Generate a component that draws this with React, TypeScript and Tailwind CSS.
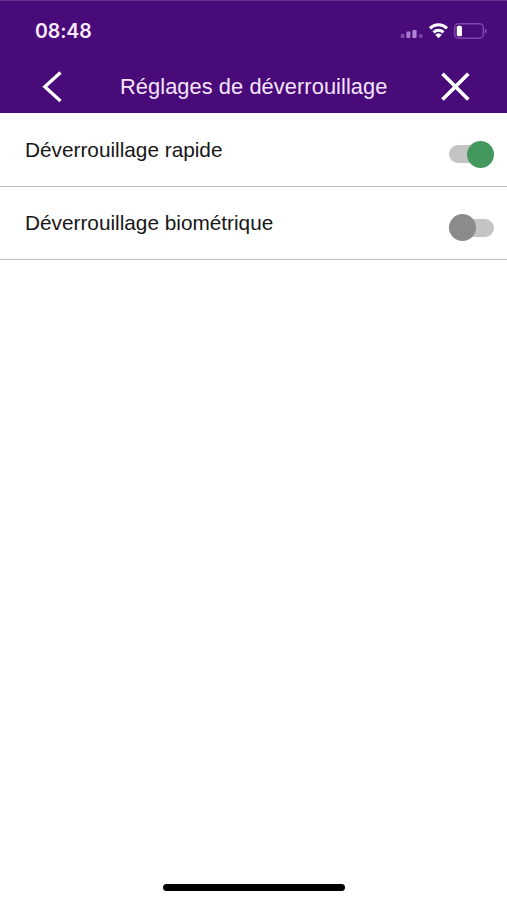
import React from "react";

function StatusIcons() {
  return (
    <svg className="h-6 w-[90px]" viewBox="0 0 90 24" fill="none">
      <g fill="#bb91df">
        <rect x="0.8" y="14.8" width="3.6" height="4.2" rx="1" opacity=".5" />
        <rect x="6.4" y="12.6" width="4" height="6.4" rx="1" opacity=".85" />
        <rect x="12.4" y="11" width="4.2" height="8" rx="1" opacity=".9" />
        <rect x="18.8" y="15" width="3.8" height="4" rx="1.4" opacity=".4" />
      </g>
      <g stroke="#fff" strokeWidth="3">
        <path d="M30 9.3a12.2 12.2 0 0 1 17 0" />
        <path d="M33.5 13.3a7.2 7.2 0 0 1 10 0" />
      </g>
      <path d="M35.2 15.8a4.8 4.8 0 0 1 6.6 0L38.5 19.2z" fill="#fff" />
      <rect x="54.7" y="4.8" width="28.6" height="14.4" rx="3.8" stroke="#7d47a8" strokeWidth="1.5" />
      <rect x="56.8" y="6.7" width="5.2" height="10.6" rx="1.6" fill="#fff" />
      <path d="M84.8 9.5c2.6 1 2.6 4.2 0 5.2z" fill="#7d47a8" />
    </svg>
  );
}

function Toggle({ on = false }: { on?: boolean }) {
  return (
    <button
      role="switch"
      aria-checked={on}
      className="relative mt-[10px] flex h-[27px] w-[45px] items-center"
    >
      <span className="h-[18px] w-[45px] rounded-full bg-[#c4c4c4]" />
      <span
        className={
          "absolute top-0 size-[27px] rounded-full " +
          (on ? "right-0 bg-[#43985e]" : "left-0 bg-[#8b8b8b]")
        }
      />
    </button>
  );
}

function Row({ label, on }: { label: string; on?: boolean }) {
  return (
    <div className="flex h-[73.5px] items-center justify-between border-b border-[#bdbdbd] pr-[13.5px] pl-[25px]">
      <span className="text-[20.8px] tracking-[-0.01px] whitespace-nowrap text-[#171717]">{label}</span>
      <Toggle on={on} />
    </div>
  );
}

export default function App() {
  return (
    <main className="flex h-[900px] w-[507px] flex-col bg-white font-['Liberation_Sans',Arial,sans-serif]">
      <header className="h-[113px] border-t border-[#65328e] bg-[#480b79]">
        <div className="flex h-[60px] items-center justify-between pr-[17px] pl-[35px]">
          <span className="pt-[2px] font-['Inter',sans-serif] text-[19.5px] font-semibold tracking-[-0.1px] text-[#fbeaff]">
            08:48
          </span>
          <StatusIcons />
        </div>
        <div className="flex h-[51px] items-center">
          <svg className="ml-[40px] h-10 w-6" viewBox="0 0 24 40" fill="none" stroke="#fff" strokeWidth="3.3">
            <path d="M20.5 5.5 4.8 19.8 20.5 34" />
          </svg>
          <h1 className="ml-[56px] w-[270px] pt-px text-[21.8px] tracking-[0.08px] whitespace-nowrap text-[#f5e4fc]">
            Réglages de déverrouillage
          </h1>
          <svg className="ml-[50px] size-8" viewBox="0 0 32 32" fill="none" stroke="#fff" strokeWidth="3.7">
            <path d="m2.5 2.7 25.8 25.8m0-25.8-25.8 25.8" />
          </svg>
        </div>
      </header>
      <Row label="Déverrouillage rapide" on />
      <Row label="Déverrouillage biométrique" />
      <div className="mt-auto mb-[9px] h-[7px] w-[182px] self-center rounded-full bg-black" />
    </main>
  );
}
